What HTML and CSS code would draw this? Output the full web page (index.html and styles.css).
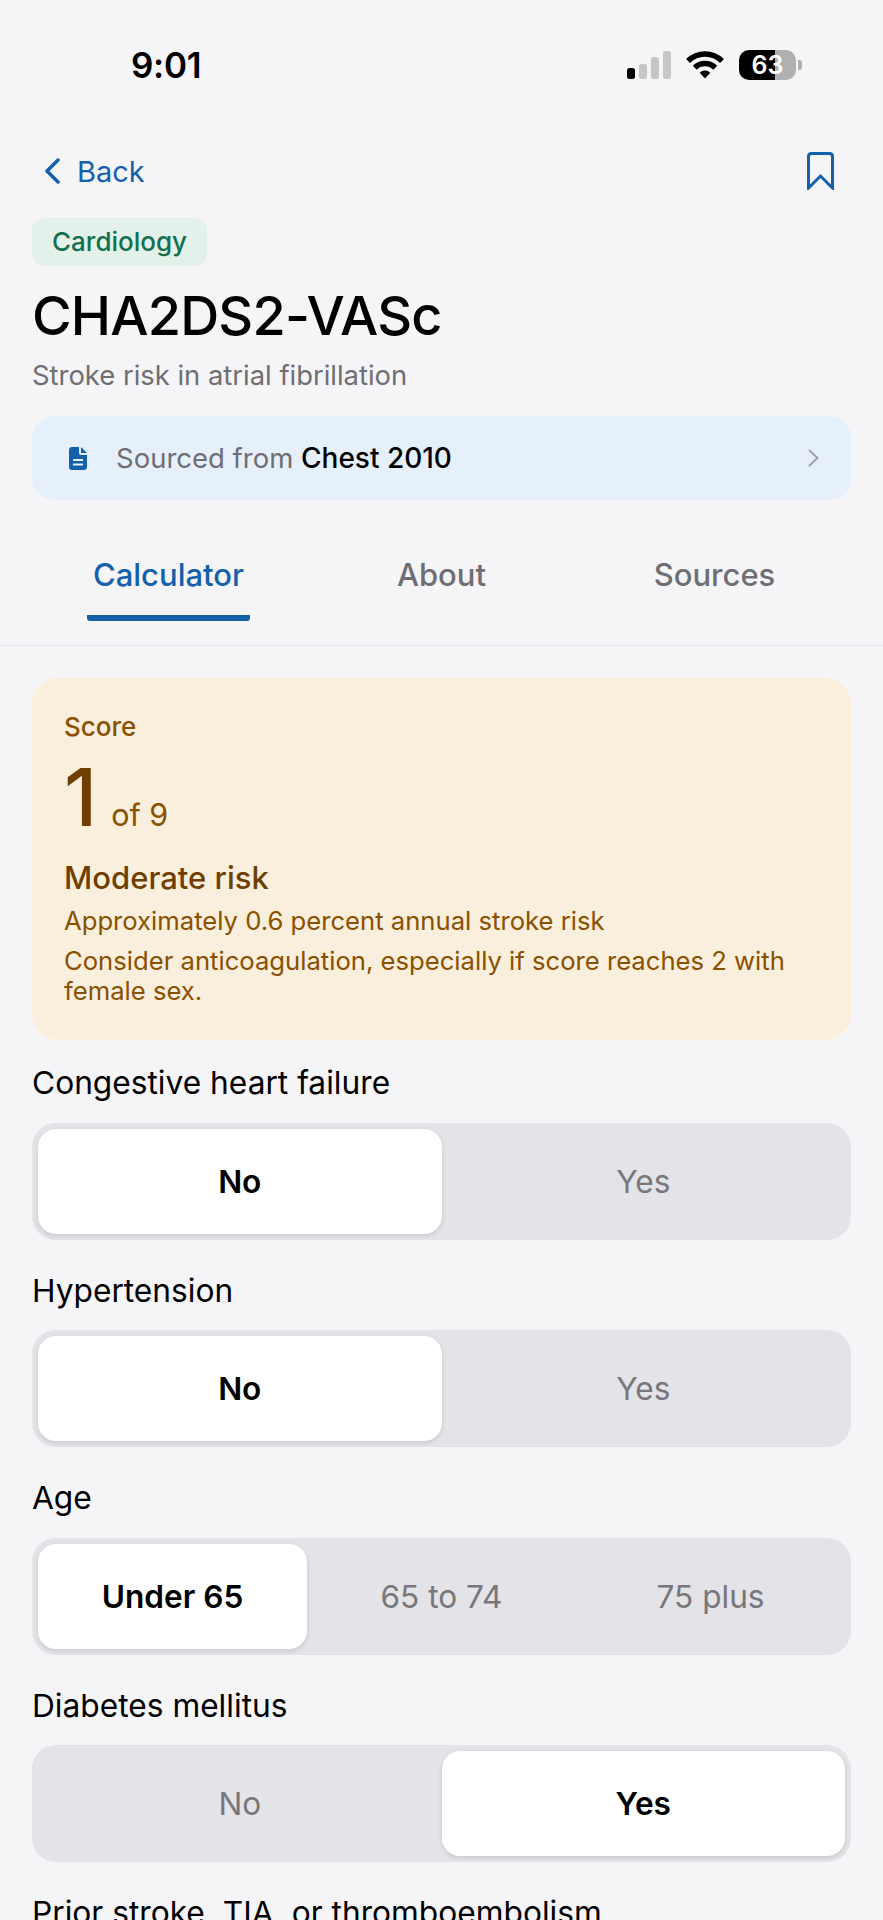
FILE: index.html
```html
<!DOCTYPE html>
<html lang="en">
<head>
    <meta charset="UTF-8">
    <title>CHA2DS2-VASc</title>
    <link rel="stylesheet" href="styles.css">
</head>
<body>
    <div class="status-bar">
        <span class="time">9:01</span>
        <div class="status-icons">
            <svg class="signal" width="44" height="28" viewBox="0 0 44 28">
                <rect x="0" y="17" width="8" height="11" rx="2.500" fill="#000"/>
                <rect x="12" y="13" width="8" height="15" rx="2.500" fill="#c6c6c8"/>
                <rect x="24" y="6" width="8" height="22" rx="2.500" fill="#c6c6c8"/>
                <rect x="36" y="0" width="8" height="28" rx="2.500" fill="#c6c6c8"/>
            </svg>
            <svg class="wifi" width="38" height="28" viewBox="0 0 38 28">
                <path d="M2 10A24 24 0 0 1 36 10" fill="none" stroke="#000" stroke-width="5.500"/>
                <path d="M8.750 16.750A14.500 14.500 0 0 1 29.250 16.750" fill="none" stroke="#000" stroke-width="5.500"/>
                <path d="M19 27.500L13.700 21.700A7.500 7.500 0 0 1 24.300 21.700Z" fill="#000"/>
            </svg>
            <div class="battery">
                <div class="battery-body"><span>63</span></div>
                <div class="battery-tip"></div>
            </div>
        </div>
    </div>

    <div class="header">
        <div class="nav-row">
            <div class="back">
                <svg width="16" height="26" viewBox="0 0 16 26"><path d="M14 2L3 13L14 24" fill="none" stroke="#1460aa" stroke-width="3.500" stroke-linecap="round" stroke-linejoin="round"/></svg>
                <span>Back</span>
            </div>
            <svg class="bookmark" width="27" height="38" viewBox="0 0 27 38"><path d="M1.500 36V4.500C1.500 2.500 2.500 1.500 4.500 1.500H22.500C24.500 1.500 25.500 2.500 25.500 4.500V36L13.500 24Z" fill="none" stroke="#1460aa" stroke-width="3" stroke-linejoin="miter"/></svg>
        </div>
        <span class="tag">Cardiology</span>
        <h1 class="title">CHA2DS2-VASc</h1>
        <p class="subtitle">Stroke risk in atrial fibrillation</p>
        <div class="source">
            <svg width="18" height="23" viewBox="0 0 18 23">
                <path d="M3 0H10V6C10 7.200 10.800 8 12 8H18V20C18 22 16.500 23 15 23H3C1 23 0 22 0 20V3C0 1 1 0 3 0Z" fill="#1460aa"/>
                <path d="M12 0L18 6H12Z" fill="#1460aa"/>
                <rect x="4" y="12" width="10" height="2" fill="#e6f0fb"/>
                <rect x="4" y="16.500" width="10" height="2" fill="#e6f0fb"/>
            </svg>
            <span class="source-text">Sourced from <b>Chest 2010</b></span>
            <svg class="source-arrow" width="11" height="18" viewBox="0 0 11 18"><path d="M1.500 1.500L9.500 9L1.500 16.500" fill="none" stroke="#a0a0a5" stroke-width="2" stroke-linecap="round" stroke-linejoin="round"/></svg>
        </div>
    </div>

    <div class="tabs">
        <div class="tab active"><span>Calculator</span></div>
        <div class="tab"><span>About</span></div>
        <div class="tab"><span>Sources</span></div>
    </div>

    <div class="content">
        <div class="score-card">
            <div class="score-label">Score</div>
            <div class="score-row"><span class="score-num">1</span><span class="score-of">of 9</span></div>
            <div class="risk">Moderate risk</div>
            <div class="risk-line">Approximately 0.6 percent annual stroke risk</div>
            <div class="risk-note">Consider anticoagulation, especially if score reaches 2 with female sex.</div>
        </div>

        <div class="field">
            <div class="field-label">Congestive heart failure</div>
            <div class="segment">
                <div class="option selected">No</div>
                <div class="option">Yes</div>
            </div>
        </div>
        <div class="field">
            <div class="field-label">Hypertension</div>
            <div class="segment">
                <div class="option selected">No</div>
                <div class="option">Yes</div>
            </div>
        </div>
        <div class="field">
            <div class="field-label">Age</div>
            <div class="segment">
                <div class="option selected">Under 65</div>
                <div class="option">65 to 74</div>
                <div class="option">75 plus</div>
            </div>
        </div>
        <div class="field">
            <div class="field-label">Diabetes mellitus</div>
            <div class="segment">
                <div class="option">No</div>
                <div class="option selected">Yes</div>
            </div>
        </div>
        <div class="field">
            <div class="field-label">Prior stroke, TIA, or thromboembolism</div>
        </div>
    </div>
</body>
</html>
```

FILE: styles.css
```css
html, body {
    margin: 0;
    height: 1920px;
    overflow: hidden;
}

body {
    background: #f5f5f8;
    color: #000;
    font-family: Inter, "Noto Sans", sans-serif;
}

/* status bar */
.status-bar {
    height: 130px;
    display: flex;
    justify-content: space-between;
    align-items: center;
    padding: 0 81px 0 131px;
    box-sizing: border-box;
}

.time {
    font-size: 35px;
    font-weight: 600;
    letter-spacing: -0.3px;
}

.status-icons {
    display: flex;
    align-items: center;
    gap: 15px;
}

.battery {
    display: flex;
    align-items: center;
    gap: 2px;
}

.battery-body {
    width: 57px;
    height: 30px;
    border-radius: 10px;
    background: linear-gradient(90deg, #000 0 63%, #b0b0b2 63% 100%);
    color: #fff;
    font-size: 25px;
    font-weight: 600;
    line-height: 30px;
    text-align: center;
}

.battery-tip {
    width: 4px;
    height: 10px;
    background: #b0b0b2;
    border-radius: 0 3px 3px 0;
}

/* header */
.header {
    padding: 0 32px;
}

.nav-row {
    display: flex;
    justify-content: space-between;
    align-items: center;
    height: 44px;
    margin-top: 19px;
    padding: 0 17px 0 12px;
}

.back {
    display: flex;
    align-items: center;
    gap: 17px;
    color: #1460aa;
    font-size: 29px;
}

.tag {
    display: inline-block;
    margin-top: 25px;
    padding: 0 20px;
    height: 48px;
    line-height: 48px;
    border-radius: 12px;
    background: #e3f1ea;
    color: #12704f;
    font-size: 26px;
    font-weight: 450;
}

.title {
    margin: 17px 0 0;
    font-size: 54px;
    font-weight: 500;
    line-height: 66px;
    letter-spacing: -0.8px;
}

.subtitle {
    margin: 9px 0 0;
    font-size: 27.400px;
    line-height: 34px;
    color: #6e6e73;
}

.source {
    display: flex;
    align-items: center;
    height: 84px;
    margin-top: 24px;
    padding: 0 32px 0 37px;
    border-radius: 22px;
    background: #e6f0fb;
}

.source-text {
    flex: 1;
    margin-left: 29px;
    font-size: 27.500px;
    color: #6e6e73;
}

.source-text b {
    font-size: 28px;
    font-weight: 450;
    color: #000;
}

/* tabs */
.tabs {
    display: flex;
    padding: 0 32px;
    margin-top: 26px;
    height: 119px;
    border-bottom: 1px solid #e5e5ea;
}

.tab {
    flex: 1;
    display: flex;
    justify-content: center;
    color: #6e6e73;
    font-size: 31px;
    font-weight: 450;
}

.tab span {
    height: 89px;
    line-height: 98px;
    padding: 0 6px;
}

.tab.active span {
    color: #1460aa;
    border-bottom: 6px solid #1460aa;
    border-radius: 0 0 3px 3px;
}

/* content */
.content {
    padding: 32px 32px 0;
}

.score-card {
    height: 362px;
    box-sizing: border-box;
    padding: 33px 32px 0;
    margin-bottom: 23px;
    border-radius: 26px;
    background: #faefdc;
    color: #8a5000;
}

.score-label {
    font-size: 26px;
    font-weight: 450;
    line-height: 32px;
}

.score-row {
    display: flex;
    align-items: baseline;
    gap: 14px;
    height: 92px;
    margin-top: 8px;
    line-height: 92px;
}

.score-num {
    font-size: 80px;
    font-weight: 500;
    color: #6e3f00;
}

.score-of {
    font-size: 30.500px;
}

.risk {
    margin-top: 15px;
    font-size: 31px;
    font-weight: 450;
    line-height: 40px;
    color: #6e3f00;
}

.risk-line {
    margin-top: 7px;
    font-size: 25.650px;
    line-height: 32px;
}

.risk-note {
    margin-top: 8.500px;
    font-size: 25.650px;
    line-height: 30.500px;
}

/* fields */
.field {
    margin-bottom: 31px;
}

.field-label {
    font-size: 31.700px;
    line-height: 40px;
    font-weight: 400;
}

.segment {
    display: flex;
    margin-top: 19.500px;
    padding: 6px;
    height: 117px;
    box-sizing: border-box;
    border-radius: 24px;
    background: #e3e3e8;
}

.option {
    flex: 1;
    display: flex;
    align-items: center;
    justify-content: center;
    border-radius: 18px;
    color: #77777c;
    font-size: 31.600px;
}

.option.selected {
    background: #fff;
    color: #000;
    font-weight: 600;
    box-shadow: 0 2px 5px rgba(0,0,0,0.12);
}
```
